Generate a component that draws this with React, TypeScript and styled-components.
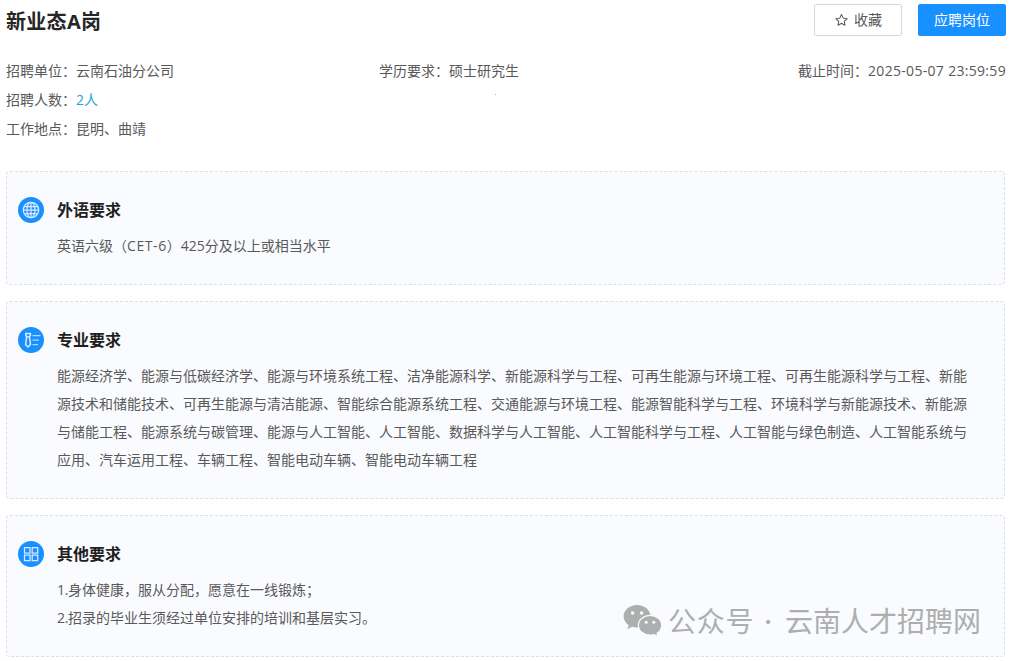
import React from "react";
import styled, { createGlobalStyle } from "styled-components";
import { AiOutlineStar } from "react-icons/ai";

const GlobalStyle = createGlobalStyle`
  * { box-sizing: border-box; }
  body {
    margin: 0;
    background: #fff;
    color: #595959;
    font-family: "Open Sans", "Noto Sans CJK SC", sans-serif;
    font-size: 14px;
    overflow: hidden;
  }
`;

const Page = styled.main`
  position: relative;
  width: 1011px;
  height: 661px;
  padding: 4px 5px 0 6px;
`;

const Header = styled.header`
  display: flex;
  justify-content: space-between;
  height: 32px;
`;

const Title = styled.h1`
  margin: 0;
  color: #262626;
  font-size: 20px;
  font-weight: 700;
  line-height: 36px;
  letter-spacing: 0.3px;
`;

const Actions = styled.div`
  display: flex;
  gap: 16px;
`;

const Button = styled.button<{ $primary?: boolean }>`
  display: flex;
  align-items: center;
  justify-content: center;
  gap: 5px;
  width: 88px;
  height: 32px;
  padding: 0;
  border: 1px solid ${(p) => (p.$primary ? "#1890ff" : "#d9d9d9")};
  border-radius: 2px;
  background: ${(p) => (p.$primary ? "#1890ff" : "#fff")};
  color: ${(p) => (p.$primary ? "#fff" : "#595959")};
  font: inherit;
  line-height: 30px;
`;

const Info = styled.section`
  display: grid;
  grid-template-columns: 373px 1fr auto;
  grid-auto-rows: 29px;
  align-items: center;
  margin-top: 20px;
`;

const InfoItem = styled.div<{ $column?: number }>`
  grid-column: ${(p) => p.$column ?? 1};
  line-height: 29px;
  white-space: nowrap;
`;

const Count = styled.span`
  color: #23a6d5;
`;

const Latin = styled.span<{ $spacing: number }>`
  letter-spacing: ${(p) => p.$spacing}px;
`;

const Speck = styled.i`
  position: absolute;
  left: 495px;
  top: 94px;
  width: 1px;
  height: 1px;
  background: #d9a0a5;
`;

const Cards = styled.div`
  display: flex;
  flex-direction: column;
  gap: 16px;
  width: 999px;
  margin-top: 28px;
`;

const Card = styled.section`
  display: grid;
  grid-template-columns: 26px 1fr;
  column-gap: 13px;
  padding: 24px 24px 24px 11px;
  border: 1px dashed #dcdfe6;
  border-radius: 4px;
  background: #fafbfe;
`;

const Badge = styled.div`
  display: flex;
  width: 26px;
  height: 26px;
  margin-top: 1px;
  border-radius: 50%;
  background: #1890ff;

  svg {
    display: block;
    fill: none;
    stroke: #dce8ff;
    stroke-width: 1.25;
  }
`;

const Heading = styled.h2`
  margin: 0 0 8px;
  color: #1f1f1f;
  font-size: 16px;
  font-weight: 700;
  line-height: 28px;
`;

const Text = styled.p`
  margin: 0;
  line-height: 28px;
`;

const Watermark = styled.div`
  position: absolute;
  left: 623px;
  top: 599px;
  display: flex;
  align-items: center;
  height: 42px;
  color: #adafaf;
  font-family: "Noto Sans CJK SC", sans-serif;
  font-size: 28px;
  line-height: 42px;
  white-space: nowrap;

  svg {
    margin-top: 2px;
  }
`;

const Account = styled.span`
  margin-left: 5px;
`;

const Name = styled.span`
  letter-spacing: 0.7px;
`;

const Dot = styled.span`
  display: inline-block;
  width: 31px;
  padding-right: 3px;
  font-family: "Open Sans", sans-serif;
  font-weight: 600;
  text-align: center;
`;

const GlobeIcon = () => (
  <svg width="26" height="26" viewBox="0 0 26 26">
    <circle cx="13" cy="13" r="7.7" />
    <ellipse cx="13" cy="13" rx="4" ry="7.7" />
    <path d="M13 5.2v15.6M5.2 13h15.6M6.5 9.5h13M6.5 16.5h13" />
  </svg>
);

const MajorIcon = () => (
  <svg width="26" height="26" viewBox="0 0 26 26">
    <path d="M7.8 6.500h4.600v2l-1 1.500H8.800l-1-1.500zM8.600 10l-1 7.500L10 20l2.500-2.500-1-7.500" strokeWidth="1.500" />
    <path d="M14.500 8.500h8M14.500 13h6.500M14.500 17.500h5.500" strokeOpacity="0.8" />
  </svg>
);

const GridIcon = () => (
  <svg width="26" height="26" viewBox="0 0 26 26">
    <path d="M6.500 6.500H12V12H6.500zM14.200 6.500h5.500V12h-5.500zM6.500 14.200H12v5.500H6.500zM14.200 14.200h5.500v5.500h-5.500z" />
  </svg>
);

const WechatIcon = () => (
  <svg width="40" height="34" viewBox="0 0 40 34">
    <path
      d="M14 1C6.500 1 .6 6 .6 12.300c0 3.700 2 6.900 5.100 9L4.400 25.300l4.800-2.500c1.500.5 3.100.8 4.800.8 7.500 0 13.500-5 13.500-11.300S21.500 1 14 1z"
      fill="currentColor"
    />
    <path
      d="M27.100 11.400c-6.500 0-11.700 4.400-11.700 9.900s5.200 9.900 11.700 9.900c1.400 0 2.800-.2 4.100-.6l3.900 2.200-1-3.500c2.800-1.800 4.600-4.700 4.600-8 0-5.500-5.200-9.900-11.600-9.900z"
      fill="currentColor"
      stroke="#fafbfe"
      strokeWidth="1.200"
    />
    <g fill="#fafbfe">
      <circle cx="9.600" cy="9" r="1.800" />
      <circle cx="18.600" cy="9" r="1.800" />
      <circle cx="23.200" cy="18.300" r="1.500" />
      <circle cx="30.800" cy="18.300" r="1.500" />
    </g>
  </svg>
);

const majors =
  "能源经济学、能源与低碳经济学、能源与环境系统工程、洁净能源科学、新能源科学与工程、可再生能源与环境工程、可再生能源科学与工程、新能源技术和储能技术、可再生能源与清洁能源、智能综合能源系统工程、交通能源与环境工程、能源智能科学与工程、环境科学与新能源技术、新能源与储能工程、能源系统与碳管理、能源与人工智能、人工智能、数据科学与人工智能、人工智能科学与工程、人工智能与绿色制造、人工智能系统与应用、汽车运用工程、车辆工程、智能电动车辆、智能电动车辆工程";

type RequirementProps = {
  icon: React.ReactNode;
  title: string;
  children: React.ReactNode;
};

const Requirement = ({ icon, title, children }: RequirementProps) => (
  <Card>
    <Badge>{icon}</Badge>
    <div>
      <Heading>{title}</Heading>
      {children}
    </div>
  </Card>
);

export default function App() {
  return (
    <Page lang="zh-CN">
      <GlobalStyle />
      <Header>
        <Title>新业态A岗</Title>
        <Actions>
          <Button>
            <AiOutlineStar size={15} />
            收藏
          </Button>
          <Button $primary>应聘岗位</Button>
        </Actions>
      </Header>
      <Info>
        <InfoItem>招聘单位：云南石油分公司</InfoItem>
        <InfoItem $column={2}>学历要求：硕士研究生</InfoItem>
        <InfoItem $column={3}>
          截止时间：<Latin $spacing={0.31}>2025-05-07 23:59:59</Latin>
        </InfoItem>
        <InfoItem>
          招聘人数：<Count>2人</Count>
        </InfoItem>
        <InfoItem>工作地点：昆明、曲靖</InfoItem>
      </Info>
      <Speck />
      <Cards>
        <Requirement icon={<GlobeIcon />} title="外语要求">
          <Text>
            英语六级（<Latin $spacing={0.6}>CET-6</Latin>）425分及以上或相当水平
          </Text>
        </Requirement>
        <Requirement icon={<MajorIcon />} title="专业要求">
          <Text>{majors}</Text>
        </Requirement>
        <Requirement icon={<GridIcon />} title="其他要求">
          <Text>
            <Latin $spacing={-0.35}>1.</Latin>身体健康，服从分配，愿意在一线锻炼；
          </Text>
          <Text>
            <Latin $spacing={-0.35}>2.</Latin>招录的毕业生须经过单位安排的培训和基层实习。
          </Text>
        </Requirement>
      </Cards>
      <Watermark>
        <WechatIcon />
        <Account>
          <Name>公众号</Name>
          <Dot>·</Dot>云南人才招聘网
        </Account>
      </Watermark>
    </Page>
  );
}
